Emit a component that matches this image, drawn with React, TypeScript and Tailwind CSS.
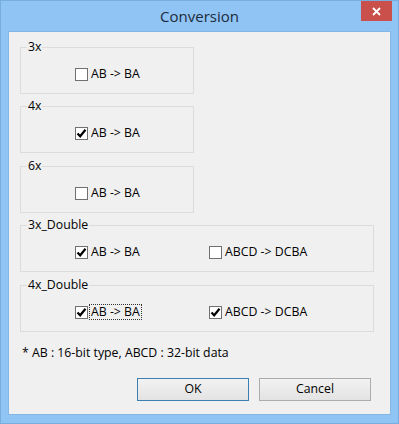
import React from "react";

interface Option {
  label: string;
  checked: boolean;
  focused?: boolean;
}

interface Group {
  title: string;
  wide: boolean;
  gap: string;
  options: Option[];
}

const GROUPS: Group[] = [
  { title: "3x", wide: false, gap: "mt-[15px]", options: [{ label: "AB -> BA", checked: false }] },
  { title: "4x", wide: false, gap: "mt-[12px]", options: [{ label: "AB -> BA", checked: true }] },
  { title: "6x", wide: false, gap: "mt-[13px]", options: [{ label: "AB -> BA", checked: false }] },
  {
    title: "3x_Double",
    wide: true,
    gap: "mt-[12px]",
    options: [
      { label: "AB -> BA", checked: true },
      { label: "ABCD -> DCBA", checked: false },
    ],
  },
  {
    title: "4x_Double",
    wide: true,
    gap: "mt-[13px]",
    options: [
      { label: "AB -> BA", checked: true, focused: true },
      { label: "ABCD -> DCBA", checked: true },
    ],
  },
];

function CheckBox({ option }: { option: Option }) {
  return (
    <label className="flex items-center w-[134px] h-[16px]">
      <span className="w-[13px] h-[13px] border border-[#707070] bg-white flex items-center justify-center shrink-0">
        {option.checked && (
          <svg width="11" height="11" viewBox="0 0 11 11">
            <path d="M1.5 5.5 L4.2 8.3 L9.5 1.8" fill="none" stroke="#000" strokeWidth="2.2" />
          </svg>
        )}
      </span>
      <span
        className={
          option.focused
            ? "ml-[2px] px-[1px] outline outline-1 outline-dotted outline-[#333] leading-[14px]"
            : "ml-[3px] leading-[16px]"
        }
      >
        {option.label}
      </span>
    </label>
  );
}

export default function App() {
  return (
    <div
      className="w-[399px] h-[424px] bg-[#8fc4f4] border border-[#78addf] flex flex-col text-[12.3px] text-black"
      style={{ fontFamily: '"Open Sans", "Noto Sans", sans-serif' }}
    >
      {/* Title bar */}
      <div className="relative h-[30px] flex items-center justify-center">
        <span className="text-[15px] text-[#1d2b3b]">Conversion</span>
        <div className="absolute right-[6px] top-0 w-[31px] h-[20px] bg-[#c9504b] flex items-center justify-center">
          <svg width="9" height="9" viewBox="0 0 9 9">
            <path d="M1 1 L8 8 M8 1 L1 8" stroke="#fff" strokeWidth="1.8" />
          </svg>
        </div>
      </div>

      {/* Client area */}
      <div className="mx-[7px] h-[384px] bg-[#f0f0f0] border border-[#84b6e6] flex flex-col px-[11px]">
        {GROUPS.map((g) => (
          <div
            key={g.title}
            className={`${g.gap} relative h-[47px] border border-[#dcdcdc] ${g.wide ? "w-[354px]" : "w-[174px]"}`}
          >
            <span className="absolute left-[6px] top-[-9px] px-[1px] bg-[#f0f0f0] leading-[16px]">
              {g.title}
            </span>
            <div className="flex pl-[54px] pt-[18px]">
              {g.options.map((o) => (
                <CheckBox key={o.label} option={o} />
              ))}
            </div>
          </div>
        ))}

        <p className="mt-[13px] ml-[2px] leading-[16px]">* AB : 16-bit type, ABCD : 32-bit data</p>

        <div className="mt-[17px] flex justify-end gap-[10px] pr-[8px]">
          <button className="w-[112px] h-[23px] border border-[#3c7fb1] bg-gradient-to-b from-[#f2f2f2] to-[#e3e3e3] leading-none">
            OK
          </button>
          <button className="w-[112px] h-[23px] border border-[#acacac] bg-gradient-to-b from-[#f2f2f2] to-[#e3e3e3] leading-none">
            Cancel
          </button>
        </div>
      </div>
    </div>
  );
}
